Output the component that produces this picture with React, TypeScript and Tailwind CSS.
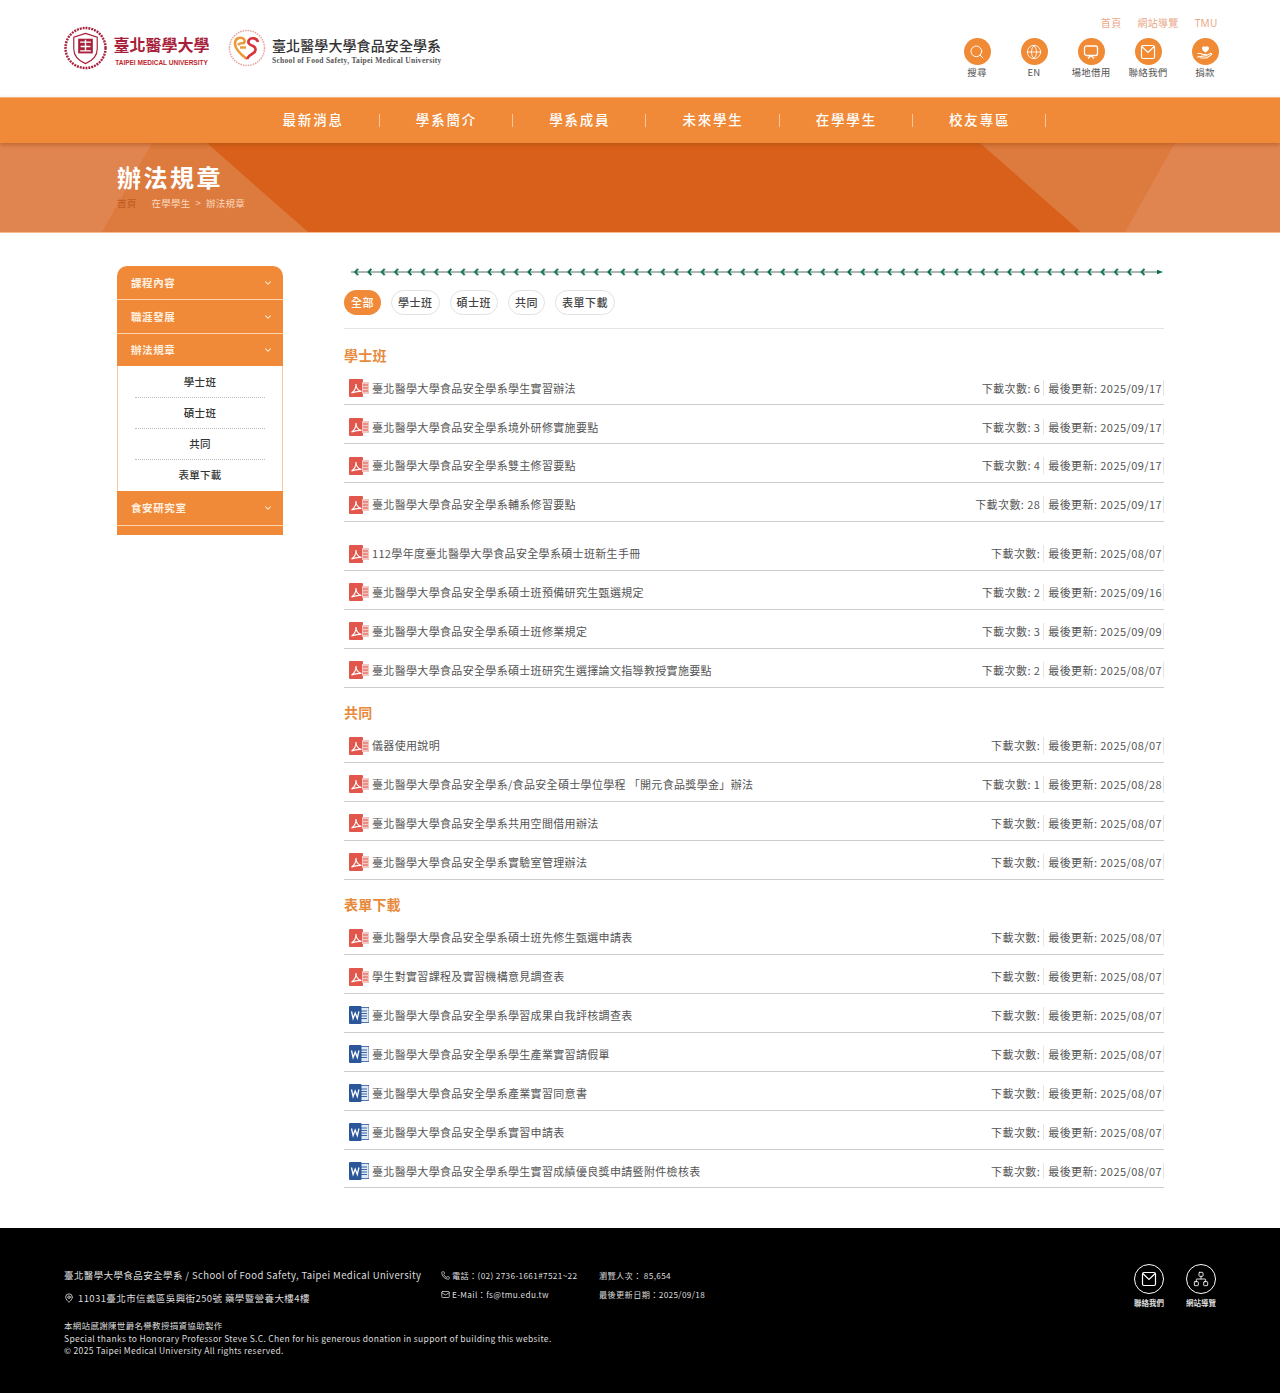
import { ChevronDown, Globe, MapPin, Mail, Network, Phone, Search } from 'lucide-react';

type Doc = { name: string; count?: number; date: string; kind?: 'pdf' | 'word' };

const cjk = "font-['Noto_Sans_CJK_TC','Noto_Sans',sans-serif]";

const navItems = ['最新消息', '學系簡介', '學系成員', '未來學生', '在學學生', '校友專區'];
const tabs = ['全部', '學士班', '碩士班', '共同', '表單下載'];

const sections: { title?: string; gap?: boolean; docs: Doc[] }[] = [
  {
    title: '學士班',
    docs: [
      { name: '臺北醫學大學食品安全學系學生實習辦法', count: 6, date: '2025/09/17' },
      { name: '臺北醫學大學食品安全學系境外研修實施要點', count: 3, date: '2025/09/17' },
      { name: '臺北醫學大學食品安全學系雙主修習要點', count: 4, date: '2025/09/17' },
      { name: '臺北醫學大學食品安全學系輔系修習要點', count: 28, date: '2025/09/17' },
    ],
  },
  {
    gap: true,
    docs: [
      { name: '112學年度臺北醫學大學食品安全學系碩士班新生手冊', date: '2025/08/07' },
      { name: '臺北醫學大學食品安全學系碩士班預備研究生甄選規定', count: 2, date: '2025/09/16' },
      { name: '臺北醫學大學食品安全學系碩士班修業規定', count: 3, date: '2025/09/09' },
      { name: '臺北醫學大學食品安全學系碩士班研究生選擇論文指導教授實施要點', count: 2, date: '2025/08/07' },
    ],
  },
  {
    title: '共同',
    docs: [
      { name: '儀器使用說明', date: '2025/08/07' },
      { name: '臺北醫學大學食品安全學系/食品安全碩士學位學程 「開元食品獎學金」辦法', count: 1, date: '2025/08/28' },
      { name: '臺北醫學大學食品安全學系共用空間借用辦法', date: '2025/08/07' },
      { name: '臺北醫學大學食品安全學系實驗室管理辦法', date: '2025/08/07' },
    ],
  },
  {
    title: '表單下載',
    docs: [
      { name: '臺北醫學大學食品安全學系碩士班先修生甄選申請表', date: '2025/08/07' },
      { name: '學生對實習課程及實習機構意見調查表', date: '2025/08/07' },
      { name: '臺北醫學大學食品安全學系學習成果自我評核調查表', date: '2025/08/07', kind: 'word' },
      { name: '臺北醫學大學食品安全學系學生產業實習請假單', date: '2025/08/07', kind: 'word' },
      { name: '臺北醫學大學食品安全學系產業實習同意書', date: '2025/08/07', kind: 'word' },
      { name: '臺北醫學大學食品安全學系實習申請表', date: '2025/08/07', kind: 'word' },
      { name: '臺北醫學大學食品安全學系學生實習成績優良獎申請暨附件檢核表', date: '2025/08/07', kind: 'word' },
    ],
  },
];

function PdfIcon() {
  return (
    <svg viewBox="0 0 20 18" className="w-5 h-[18px] shrink-0">
      <rect x="0" y="0" width="14" height="18" rx="1" fill="#e2574c" />
      <rect x="13" y="3" width="7" height="12" fill="#f3c6c2" />
      <path d="M14 6h5M14 9h5M14 12h5" stroke="#e2574c" strokeWidth="1" />
      <path d="M2.5 14c2.5-1.5 4.5-5 4.5-9 0 4 2 6.5 5.5 7.5-3-.3-6.5.2-10 1.500z" fill="none" stroke="#fff" strokeWidth="1.100" />
    </svg>
  );
}

function WordIcon() {
  return (
    <svg viewBox="0 0 20 18" className="w-5 h-[18px] shrink-0">
      <rect x="10" y="1.500" width="10" height="15" fill="#dfe8f5" stroke="#2b579a" strokeWidth="0.800" />
      <path d="M12 5h6M12 7.500h6M12 10h6M12 12.500h6" stroke="#2b579a" strokeWidth="0.900" />
      <rect x="0" y="0" width="12.500" height="18" rx="1" fill="#2b579a" />
      <path d="M2.500 5.500l1.600 7 2.100-5.500 2.100 5.500 1.600-7" fill="none" stroke="#fff" strokeWidth="1.300" />
    </svg>
  );
}

function EnvelopeSquare({ size = 16 }: { size?: number }) {
  return (
    <svg viewBox="0 0 16 16" width={size} height={size} fill="none" stroke="currentColor" strokeWidth="1.200">
      <rect x="1.500" y="1.500" width="13" height="13" rx="1.500" />
      <path d="M1.800 2.500L8 8.500l6.200-6" />
    </svg>
  );
}

function BoardIcon() {
  return (
    <svg viewBox="0 0 16 16" width="16" height="16" fill="none" stroke="currentColor" strokeWidth="1.300">
      <rect x="1.500" y="2" width="13" height="9.500" rx="2" />
      <path d="M5 14.500l3-3 3 3" />
    </svg>
  );
}

function DonateIcon() {
  return (
    <svg viewBox="0 0 18 18" width="18" height="18" fill="none">
      <path d="M9.500 9.500C7.500 8 6 6.800 6 5.200 6 4 7 3.200 8 3.200c.7 0 1.200.3 1.500.9.300-.6.800-.9 1.500-.9 1 0 2 .8 2 2 0 1.600-1.500 2.800-3.500 4.300z" fill="#fff" />
      <path d="M1.500 10.500h3l2.500 1h3c.8 0 .8 1.500 0 1.500H7.500M10.500 12.500l4-2c1-.4 1.600.8.800 1.400L10.500 15H5l-1.500-1H1.500z" stroke="#fff" strokeWidth="1.100" strokeLinejoin="round" />
    </svg>
  );
}

function UniversitySeal() {
  return (
    <svg viewBox="0 0 44 44" className="w-[43px] h-[44px] shrink-0">
      <circle cx="22" cy="22" r="20.500" fill="none" stroke="#a8213c" strokeWidth="2.500" strokeDasharray="2 1" />
      <path d="M22 7l12 4v12c0 7-5 12-12 15-7-3-12-8-12-15V11z" fill="#fff" stroke="#a8213c" strokeWidth="1.200" />
      <rect x="14.500" y="12.500" width="15" height="15" fill="#a8213c" />
      <path d="M16.500 16h11M22 13.500v12M17 20.500h10M16.500 25h11" stroke="#fff" strokeWidth="1.400" />
    </svg>
  );
}

function HeartLogo() {
  return (
    <svg viewBox="0 0 38 38" className="w-[38px] h-[38px] shrink-0">
      <circle cx="19" cy="19" r="17.500" fill="none" stroke="#e9a0a0" strokeWidth="1.500" strokeDasharray="1.500 1" />
      <path d="M19 30C12 25 7 20 7 14.500 7 10 11 8 14 9c3 1 3 3 2 5-3 0-5 .5-6 2" fill="none" stroke="#ec9a38" strokeWidth="2.600" />
      <path d="M12 18.500h6" stroke="#ec9a38" strokeWidth="2.400" />
      <path d="M30 13c-1-4-7-5-9-2-2 3 1 5 4 6 4 2 3 6-1 8-2 1-4 3-5 5" fill="none" stroke="#d8343c" strokeWidth="2.600" />
    </svg>
  );
}

function OrnamentLine() {
  return (
    <svg className="block w-[813px] h-[8px] ml-[7px]" viewBox="0 0 813 8">
      <defs>
        <pattern id="leaf" x="0" y="0" width="13.330" height="8" patternUnits="userSpaceOnUse">
          <path d="M7 .8L4.200 4 7 7.200" fill="none" stroke="#0b6b50" strokeWidth="1.900" />
        </pattern>
      </defs>
      <line x1="0" y1="4" x2="808" y2="4" stroke="#55736a" strokeWidth="1" />
      <rect x="0" y="0" width="802" height="8" fill="url(#leaf)" />
      <path d="M806 1.800l6 2.200-6 2.200z" fill="#0b6b50" />
    </svg>
  );
}

function Header() {
  const tools = [
    { label: '搜尋', icon: <Search size={16} strokeWidth={1.500} /> },
    { label: 'EN', icon: <Globe size={16} strokeWidth={1.300} /> },
    { label: '場地借用', icon: <BoardIcon /> },
    { label: '聯絡我們', icon: <EnvelopeSquare /> },
    { label: '捐款', icon: <DonateIcon /> },
  ];
  return (
    <header className="h-[97px] bg-white flex justify-between pl-[64px] pr-[46.500px]">
      <div className="flex items-center pt-[1px] h-[94px]">
        <UniversitySeal />
        <div className="ml-[6px] w-[97px] flex flex-col items-center pt-[4px]">
          <span className="text-[#a8213c] text-[16px] leading-[24px] whitespace-nowrap font-semibold font-['Noto_Sans_CJK_TC',serif]">臺北醫學大學</span>
          <span className="mt-[2px] text-[#c0272d] text-[6.500px] leading-[10px] font-bold whitespace-nowrap font-['Liberation_Sans',sans-serif]">TAIPEI MEDICAL UNIVERSITY</span>
        </div>
        <div className="ml-[18px]"><HeartLogo /></div>
        <div className="ml-[6px] flex flex-col pt-[6px]">
          <span className="text-[#333] text-[14px] leading-[20px] tracking-[0.100px] whitespace-nowrap font-medium font-['Noto_Sans_CJK_TC',serif]">臺北醫學大學食品安全學系</span>
          <span className="mt-[1px] text-[#555] text-[7.500px] leading-[10px] tracking-[0.300px] font-bold whitespace-nowrap font-['Liberation_Serif',serif]">School of Food Safety, Taipei Medical University</span>
        </div>
      </div>
      <div className="flex flex-col items-end pt-[16px]">
        <div className="flex text-[10px] leading-[14px] text-[#e9a888] gap-[16px] pr-[16px] tracking-[0.300px]">
          <span>首頁</span>
          <span>網站導覽</span>
          <span className="font-['Noto_Sans',sans-serif]">TMU</span>
        </div>
        <div className="flex mt-[8px]">
          {tools.map((t) => (
            <div key={t.label} className="w-[57px] flex flex-col items-center">
              <div className="w-[27px] h-[27px] rounded-full bg-[#f08a35] text-white flex items-center justify-center">{t.icon}</div>
              <span className="mt-[1px] text-[9.500px] leading-[13px] text-[#555] tracking-[0.250px] whitespace-nowrap">{t.label}</span>
            </div>
          ))}
        </div>
      </div>
    </header>
  );
}

function Nav() {
  return (
    <nav className="h-[46px] bg-[#f08a38] border-t border-[#f5b27a] flex pl-[246.500px] relative z-10 shadow-[0_2px_4px_rgba(150,70,10,0.450)]">
      {navItems.map((item) => (
        <div key={item} className="w-[133.300px] flex items-center justify-center relative pb-[2px]">
          <span className="text-white text-[13.500px] tracking-[1.800px] font-medium">{item}</span>
          <span className="absolute right-0 top-[16px] h-[13px] w-px bg-[#f7c79b]" />
        </div>
      ))}
    </nav>
  );
}

function Banner() {
  return (
    <section className="relative h-[90px] bg-[#d9601a] border-b border-[#f3b98f] overflow-hidden">
      <svg className="absolute inset-0 w-full h-full" viewBox="0 0 1280 90" preserveAspectRatio="none">
        <polygon points="0,0 207,0 308,90 0,90" fill="#dd7a3e" />
        <polygon points="0,0 152,0 102,90 0,90" fill="#e08550" />
        <polygon points="980,0 1280,0 1280,90 1081,90" fill="#dd7a3e" />
        <polygon points="1175,0 1280,0 1280,90 1125,90" fill="#e08550" />
      </svg>
      <div className="relative pl-[117px] pt-[17px]">
        <h1 className="text-white text-[24px] leading-[34px] font-bold tracking-[2.500px]">辦法規章</h1>
        <div className="flex items-center mt-[1px] text-[9.500px] leading-[16px] tracking-[0.250px] text-[#fbd9bd]">
          <span className="text-[#bd5a22]">首頁</span>
          <span className="ml-[15px]">在學學生</span>
          <span className="mx-[5px]">&gt;</span>
          <span>辦法規章</span>
        </div>
      </div>
    </section>
  );
}

function Sidebar() {
  const head = 'h-[33.400px] bg-[#f08a38] flex items-center justify-between pl-[14px] pr-[10px] text-[#fff1e2] text-[10.500px] font-bold tracking-[0.600px]';
  const subs = ['學士班', '碩士班', '共同', '表單下載'];
  return (
    <aside className="w-[166px] shrink-0 mt-[33px] self-start">
      <div className={`${head} rounded-t-[10px]`}>
        <span>課程內容</span>
        <ChevronDown size={10} strokeWidth={2.500} />
      </div>
      <div className={`${head} border-t border-[#fbd3ad]`}>
        <span>職涯發展</span>
        <ChevronDown size={10} strokeWidth={2.500} />
      </div>
      <div className={`${head} border-t border-[#fbd3ad]`}>
        <span>辦法規章</span>
        <ChevronDown size={10} strokeWidth={2.500} />
      </div>
      <div className="bg-white border-x border-[#f8c9a0] px-[17px] py-[0.500px]">
        {subs.map((s, i) => (
          <div
            key={s}
            className={`h-[31px] flex items-center justify-center text-[10.500px] text-[#333] font-medium tracking-[0.300px] ${i < 3 ? 'border-b border-dotted border-[#bbb]' : ''}`}
          >
            {s}
          </div>
        ))}
      </div>
      <div className={head}>
        <span>食安研究室</span>
        <ChevronDown size={10} strokeWidth={2.500} />
      </div>
      <div className="h-[10.600px] bg-[#f08a38] border-t border-[#fbd3ad]" />
    </aside>
  );
}

function DocRow({ doc }: { doc: Doc }) {
  return (
    <div className="h-[38.900px] flex items-center border-b border-[#ccc] pl-[5px] pt-[5px] text-[#555] text-[11px] tracking-[0.330px]">
      {doc.kind === 'word' ? <WordIcon /> : <PdfIcon />}
      <span className="ml-[3px] flex-1 whitespace-nowrap">{doc.name}</span>
      <span className="whitespace-nowrap tracking-[0.420px]">下載次數: {doc.count ?? ''}</span>
      <span className="ml-[3px] pl-[4px] border-l border-[#e5e5e5] pr-px border-r whitespace-nowrap tracking-[0.420px]">最後更新: {doc.date}</span>
    </div>
  );
}

function Content() {
  return (
    <div className="w-[820px] ml-[61px] pt-[35px]">
      <OrnamentLine />
      <div className="flex gap-[10px] mt-[14px] pb-[13px] border-b border-[#e4e4e4]">
        {tabs.map((t, i) => (
          <span
            key={t}
            className={
              i === 0
                ? 'h-[25px] px-[7px] rounded-full bg-[#f08a38] text-white text-[11px] leading-[25px] tracking-[0.500px] font-medium'
                : 'h-[25px] px-[6px] rounded-full border border-[#e2e2e2] text-[#444] text-[11px] leading-[23px] tracking-[0.500px] font-medium'
            }
          >
            {t}
          </span>
        ))}
      </div>
      {sections.map((sec, i) => (
        <div key={i} className={sec.gap ? 'mt-[10px]' : ''}>
          {sec.title && (
            <h2 className={`text-[#e88a3c] text-[14px] leading-[20px] font-bold tracking-[0.200px] mb-[2px] ${i === 0 ? 'mt-[15.500px]' : 'mt-[14.500px]'}`}>
              {sec.title}
            </h2>
          )}
          {sec.docs.map((d) => (
            <DocRow key={d.name} doc={d} />
          ))}
        </div>
      ))}
    </div>
  );
}

function Footer() {
  return (
    <footer className="mt-[40px] h-[165px] bg-black text-[#ddd] flex justify-between pl-[64px] pr-[64px] pt-[40px] text-[9.500px] tracking-[0.500px]">
      <div>
        <div className="flex">
          <div className="w-[377px]">
            <p className="text-[9.500px] leading-[14px] tracking-[0.400px] whitespace-nowrap">臺北醫學大學食品安全學系 / School of Food Safety, Taipei Medical University</p>
            <p className="mt-[9px] flex items-center text-[9.500px] leading-[14px] tracking-[0.400px]">
              <MapPin size={10} className="mr-[4px]" />
              11031臺北市信義區吳興街250號 藥學暨營養大樓4樓
            </p>
          </div>
          <div className="w-[158px] text-[8.200px] leading-[14px] tracking-[0.350px]">
            <p className="flex items-center whitespace-nowrap"><Phone size={9} className="mr-[2px]" />電話：(02) 2736-1661#7521~22</p>
            <p className="flex items-center mt-[5px] whitespace-nowrap"><Mail size={9} className="mr-[2px]" />E-Mail：fs@tmu.edu.tw</p>
          </div>
          <div className="text-[8.200px] leading-[14px] tracking-[0.350px]">
            <p className="whitespace-nowrap">瀏覽人次： 85,654</p>
            <p className="mt-[5px] whitespace-nowrap">最後更新日期：2025/09/18</p>
          </div>
        </div>
        <div className="mt-[14px] text-[8.500px] leading-[12.500px] tracking-[0.310px]">
          <p>本網站感謝陳世爵名譽教授捐資協助製作</p>
          <p>Special thanks to Honorary Professor Steve S.C. Chen for his generous donation in support of building this website.</p>
          <p>© 2025 Taipei Medical University All rights reserved.</p>
        </div>
      </div>
      <div className="flex gap-[22px] mt-[-4px]">
        {[
          { label: '聯絡我們', icon: <EnvelopeSquare /> },
          { label: '網站導覽', icon: <Network size={16} strokeWidth={1.300} /> },
        ].map((it) => (
          <div key={it.label} className="w-[30px] flex flex-col items-center">
            <div className="w-[30px] h-[30px] shrink-0 rounded-full border-[1.500px] border-white text-white flex items-center justify-center">{it.icon}</div>
            <span className="mt-[3px] text-[7.500px] leading-[12px] font-bold tracking-normal whitespace-nowrap">{it.label}</span>
          </div>
        ))}
      </div>
    </footer>
  );
}

export default function App() {
  return (
    <div className={`${cjk} bg-white w-[1280px] min-h-[1393px]`}>
      <Header />
      <Nav />
      <Banner />
      <main className="flex pl-[117px]">
        <Sidebar />
        <Content />
      </main>
      <Footer />
    </div>
  );
}
